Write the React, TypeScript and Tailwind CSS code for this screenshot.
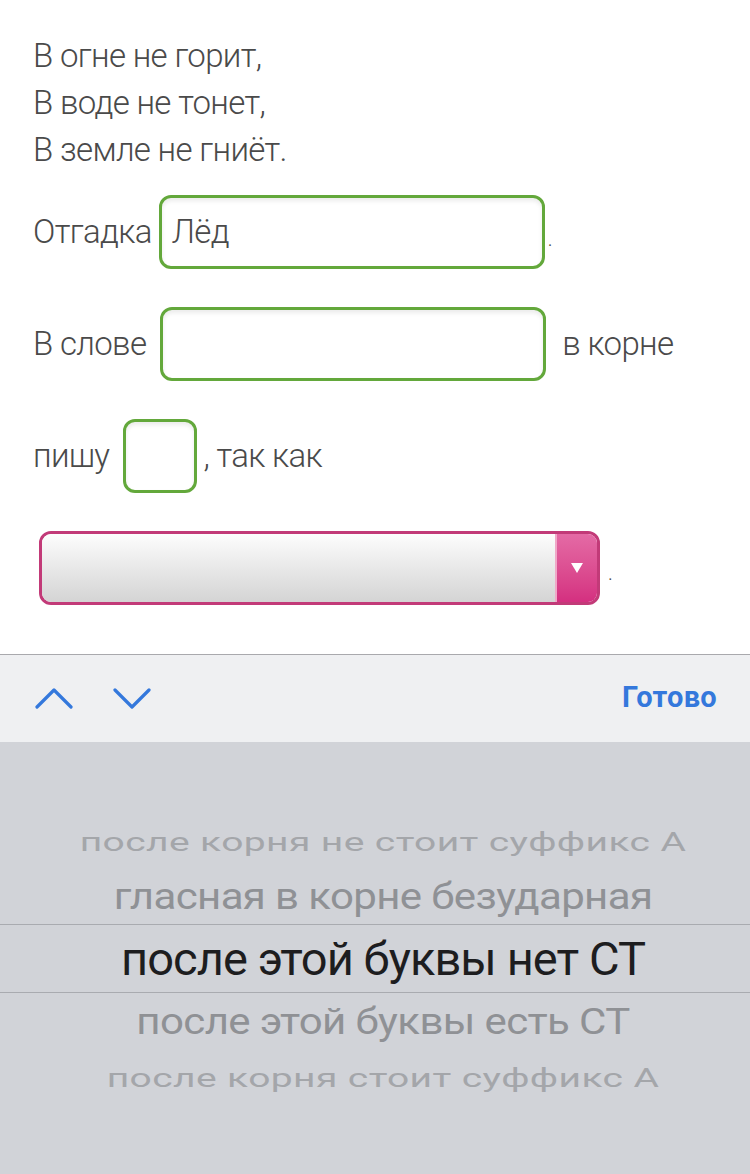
import React from 'react';

const GreenBox: React.FC<{ w: string; value?: string }> = ({ w, value }) => (
  <div
    className={`${w} h-[74px] shrink-0 rounded-[12px] border-[3px] border-[#63a83b] bg-white shadow-[inset_0_3px_4px_rgba(0,0,0,0.08)] flex items-center px-[10px] text-[#4a4a4a]`}
  >
    {value}
  </div>
);

const App: React.FC = () => {
  const options = [
    { text: 'после корня не стоит суффикс А', cls: 'h-[55px] text-[#a4a6aa] text-[39px] scale-y-[0.64] tracking-[0.01em]' },
    { text: 'гласная в корне безударная', cls: 'h-[54px] text-[#8f9195] text-[42px] scale-y-[0.86] tracking-[-0.015em]' },
    { text: 'после этой буквы нет СТ', cls: 'h-[69px] text-[#1d1d1f] text-[47px] tracking-[-0.02em]' },
    { text: 'после этой буквы есть СТ', cls: 'h-[58px] text-[#8f9195] text-[42px] scale-y-[0.86] tracking-[-0.015em]' },
    { text: 'после корня стоит суффикс А', cls: 'h-[54px] text-[#a4a6aa] text-[39px] scale-y-[0.64] tracking-[0.01em]' },
  ];

  return (
    <div className="w-[750px] h-[1174px] flex flex-col bg-white font-['Roboto',sans-serif] overflow-hidden">
      {/* Task */}
      <div className="pl-[33px] pt-[32px] h-[654px] text-[#4a4a4a] font-light text-[33px] tracking-[-0.02em]">
        <div className="leading-[47px]">
          <div>В огне не горит,</div>
          <div>В воде не тонет,</div>
          <div>В земле не гниёт.</div>
        </div>

        <div className="mt-[22px] h-[74px] flex items-center">
          <span>Отгадка</span>
          <div className="ml-[7px]">
            <GreenBox w="w-[386px]" value="Лёд" />
          </div>
          <span className="ml-[3px] text-[20px] pt-[14px]">.</span>
        </div>

        <div className="mt-[38px] h-[74px] flex items-center">
          <span>В слове</span>
          <div className="ml-[14px]">
            <GreenBox w="w-[386px]" />
          </div>
          <span className="ml-[16px]">в корне</span>
        </div>

        <div className="mt-[38px] h-[74px] flex items-center">
          <span>пишу</span>
          <div className="ml-[14px]">
            <GreenBox w="w-[74px]" />
          </div>
          <span className="ml-[6px]">, так как</span>
        </div>

        <div className="mt-[38px] h-[74px] flex items-center">
          <div className="ml-[6px] w-[561px] h-[74px] rounded-[12px] border-[3px] border-[#c23a78] flex overflow-hidden">
            <div className="flex-1 bg-gradient-to-b from-[#fdfdfd] to-[#d4d4d4]" />
            <div className="w-[42px] border-l-[2px] border-[#f0a8c8] bg-gradient-to-b from-[#e46aa5] to-[#d42f80] flex items-center justify-center">
              <svg width="14" height="12" viewBox="0 0 14 12">
                <path d="M1 1 L13 1 L7 11 Z" fill="#ffffff" />
              </svg>
            </div>
          </div>
          <span className="ml-[8px] text-[20px] pt-[10px]">.</span>
        </div>
      </div>

      {/* Toolbar */}
      <div className="h-[88px] border-t border-[#a9a9ad] bg-[#eff0f2] flex items-center justify-between pl-[35px] pr-[33px]">
        <div className="flex items-center gap-[38px]">
          <svg width="40" height="24" viewBox="0 0 40 24">
            <path d="M2 20 L19 3 L36 20" fill="none" stroke="#3478dc" strokeWidth="3.2" strokeLinecap="round" strokeLinejoin="round" />
          </svg>
          <svg width="40" height="24" viewBox="0 0 40 24">
            <path d="M2 3 L19 20 L36 3" fill="none" stroke="#3478dc" strokeWidth="3.2" strokeLinecap="round" strokeLinejoin="round" />
          </svg>
        </div>
        <span className="text-[#3478dc] font-bold text-[29px] tracking-[0.01em] pb-[2px]">Готово</span>
      </div>

      {/* Picker */}
      <div className="flex-1 bg-[#d1d3d8] pt-[73px]">
        {options.map((o, i) => (
          <div
            key={i}
            className={`flex items-center justify-center pl-[16px] ${i === 2 ? 'border-y border-[#a9abb0]' : ''} ${o.cls.split(' ')[0]}`}
          >
            <span className={`block whitespace-nowrap leading-none ${o.cls.split(' ').slice(1).join(' ')}`}>{o.text}</span>
          </div>
        ))}
      </div>
    </div>
  );
};

export default App;
